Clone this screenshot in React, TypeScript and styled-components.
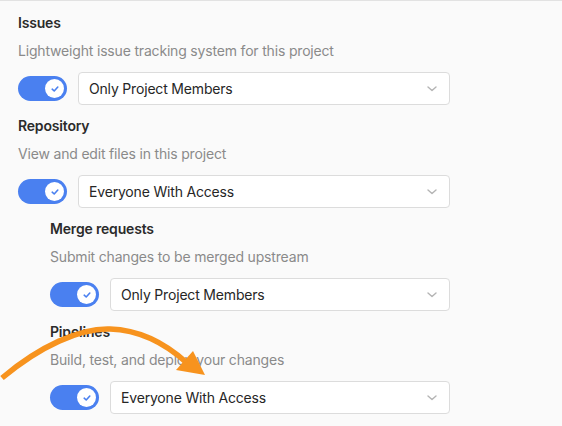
import styled, { createGlobalStyle } from "styled-components";

const GlobalStyle = createGlobalStyle`
  html, body {
    margin: 0;
    padding: 0;
    background: #fafafa;
  }
  body {
    font-family: Inter, "Noto Sans", "Liberation Sans", sans-serif;
    letter-spacing: -0.18px;
    -webkit-font-smoothing: antialiased;
  }
`;

const Page = styled.div`
  position: relative;
  width: 562px;
  height: 426px;
  box-sizing: border-box;
  border-top: 1px solid #e2e2e2;
  background: #fafafa;
  padding: 12px 112px 0 18px;
  overflow: hidden;
`;

const Feature = styled.section<{ $nested?: boolean }>`
  display: flex;
  flex-direction: column;
  margin-left: ${(p) => (p.$nested ? "32px" : "0")};
  margin-bottom: 11px;
`;

const Title = styled.h4`
  margin: 0 0 8px;
  font-size: 14px;
  line-height: 20px;
  font-weight: 600;
  color: #2b2b2b;
`;

const Desc = styled.p`
  margin: 0 0 11px;
  font-size: 14px;
  line-height: 20px;
  color: #8a8a8a;
`;

const Row = styled.div`
  display: flex;
  align-items: center;
  gap: 11px;
`;

const Toggle = styled.span`
  flex: none;
  display: flex;
  align-items: center;
  justify-content: flex-end;
  width: 49px;
  height: 25px;
  padding: 0 3px;
  box-sizing: border-box;
  border-radius: 13px;
  background: #4a80f0;
`;

const Knob = styled.span`
  display: flex;
  align-items: center;
  justify-content: center;
  width: 19px;
  height: 19px;
  border-radius: 50%;
  background: #fff;
`;

const Select = styled.div`
  flex: 1;
  display: flex;
  align-items: center;
  justify-content: space-between;
  height: 33px;
  box-sizing: border-box;
  padding: 0 12px 0 10px;
  background: #fff;
  border: 1px solid #dcdcdc;
  border-radius: 4px;
  font-size: 14px;
  color: #262626;
`;

const Arrow = styled.svg`
  position: absolute;
  left: 0;
  top: 0;
  pointer-events: none;
`;

function Check() {
  return (
    <svg width="10" height="10" viewBox="0 0 10 10">
      <path
        d="M2.2 5.2 L4.2 7 L7.8 3"
        fill="none"
        stroke="#4a80f0"
        strokeWidth="1.6"
        strokeLinecap="round"
        strokeLinejoin="round"
      />
    </svg>
  );
}

function Chevron() {
  return (
    <svg width="10" height="6" viewBox="0 0 10 6">
      <path
        d="M1 1 L5 4.6 L9 1"
        fill="none"
        stroke="#b4b4b4"
        strokeWidth="1.4"
        strokeLinecap="round"
        strokeLinejoin="round"
      />
    </svg>
  );
}

type FeatureData = {
  title: string;
  desc: string;
  access: string;
  nested?: boolean;
};

const features: FeatureData[] = [
  { title: "Issues", desc: "Lightweight issue tracking system for this project", access: "Only Project Members" },
  { title: "Repository", desc: "View and edit files in this project", access: "Everyone With Access" },
  { title: "Merge requests", desc: "Submit changes to be merged upstream", access: "Only Project Members", nested: true },
  { title: "Pipelines", desc: "Build, test, and deploy your changes", access: "Everyone With Access", nested: true },
];

export default function App() {
  return (
    <>
      <GlobalStyle />
      <Page>
        {features.map((f) => (
          <Feature key={f.title} $nested={f.nested}>
            <Title>{f.title}</Title>
            <Desc>{f.desc}</Desc>
            <Row>
              <Toggle>
                <Knob>
                  <Check />
                </Knob>
              </Toggle>
              <Select>
                <span>{f.access}</span>
                <Chevron />
              </Select>
            </Row>
          </Feature>
        ))}
        <Arrow width="562" height="426" viewBox="0 0 562 426">
          <path
            d="M2 377 C 40 345, 80 327, 110 328 C 140 329, 165 342, 187 362"
            fill="none"
            stroke="#f7931e"
            strokeWidth="5.5"
            strokeLinecap="butt"
          />
          <path d="M193 350 L205 374 L176 369 Z" fill="#f7931e" />
        </Arrow>
      </Page>
    </>
  );
}
